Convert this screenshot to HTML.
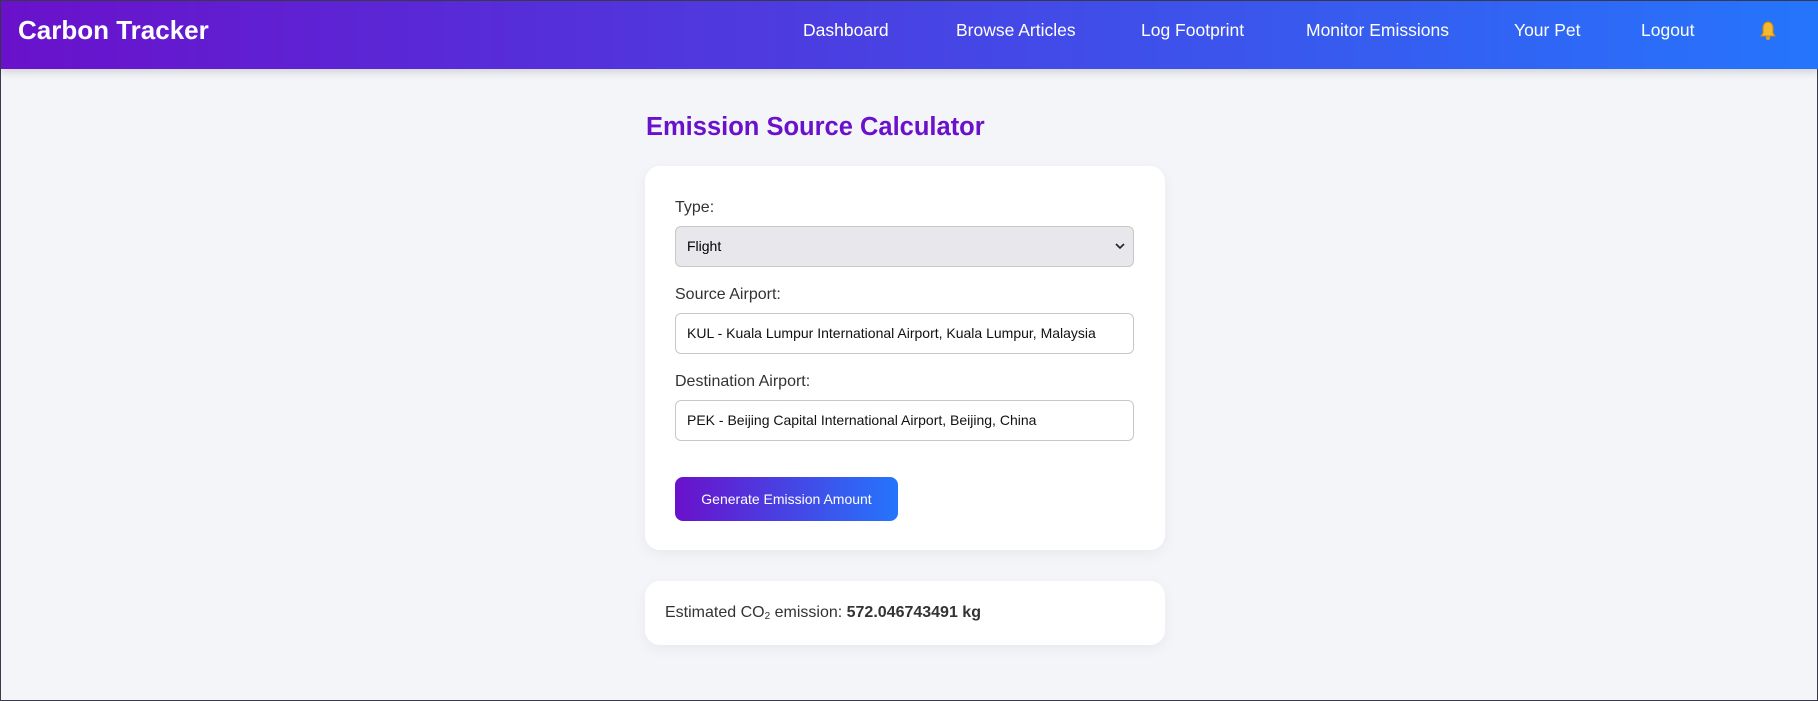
<!DOCTYPE html>
<html><head><meta charset="utf-8"><style>
*{box-sizing:border-box;margin:0;padding:0}
html,body{width:1818px;height:701px;overflow:hidden}
body{background:#f4f5f9;font-family:"Liberation Sans",sans-serif;color:#333;position:relative;border:1px solid #3a3a4a}
.hdr{position:absolute;left:0;top:0;width:1818px;height:68px;background:linear-gradient(90deg,#6a11cb,#2575fc);box-shadow:0 3px 8px rgba(0,0,0,.15)}
.logo{position:absolute;left:17px;top:14px;font-size:26px;font-weight:bold;color:#fff}
.nav{position:absolute;top:19px;font-size:17.5px;color:#fff;white-space:nowrap}
h1{position:absolute;left:645px;top:112px;font-size:25.5px;font-weight:bold;color:#6a11cb;white-space:nowrap}
.card{position:absolute;left:644px;width:520px;background:#fff;border-radius:15px;box-shadow:0 4px 14px rgba(0,0,0,.05)}
.lbl{position:absolute;left:674px;font-size:16px;color:#333}
.inp{position:absolute;left:674px;width:459px;height:41px;border:1px solid #c8c8c8;border-radius:6px;background:#fff;font-size:14px;color:#111;padding:0 0 0 11px;line-height:39px;white-space:nowrap;overflow:hidden}
.btn{position:absolute;left:674px;top:476px;width:223px;height:44px;border-radius:8px;background:linear-gradient(90deg,#6a11cb,#2575fc);color:#fff;font-size:14px;text-align:center;line-height:44px}
</style></head><body>
<div class="hdr">
<div class="logo">Carbon Tracker</div>
<div class="nav" style="left:802px">Dashboard</div>
<div class="nav" style="left:955px">Browse Articles</div>
<div class="nav" style="left:1140px">Log Footprint</div>
<div class="nav" style="left:1305px">Monitor Emissions</div>
<div class="nav" style="left:1513px">Your Pet</div>
<div class="nav" style="left:1640px">Logout</div>
<svg style="position:absolute;left:1758px;top:20px" width="18" height="20" viewBox="0 0 18 20"><path d="M9 1c-3 0-5 2.5-5 6v5l-2 3h14l-2-3V7c0-3.5-2-6-5-6z" fill="#f5b82e" stroke="#c98a10" stroke-width="1"/><circle cx="9" cy="17" r="2" fill="#e0a020"/></svg>
</div>
<h1>Emission Source Calculator</h1>
<div class="card" style="top:165px;height:384px"></div>
<div class="lbl" style="top:198px">Type:</div>
<div class="inp" style="top:225px;background:#e8e7eb;color:#000">Flight<svg style="position:absolute;right:8px;top:16px" width="10" height="7" viewBox="0 0 10 7"><path d="M1 1l4 4 4-4" fill="none" stroke="#222" stroke-width="1.6"/></svg></div>
<div class="lbl" style="top:285px">Source Airport:</div>
<div class="inp" style="top:312px">KUL - Kuala Lumpur International Airport, Kuala Lumpur, Malaysia</div>
<div class="lbl" style="top:372px">Destination Airport:</div>
<div class="inp" style="top:399px">PEK - Beijing Capital International Airport, Beijing, China</div>
<div class="btn">Generate Emission Amount</div>
<div class="card" style="top:580px;height:64px"></div>
<div class="lbl" style="left:664px;top:603px">Estimated CO<sub style="font-size:10px;vertical-align:-2px">2</sub> emission: <b>572.046743491 kg</b></div>
</body></html>
